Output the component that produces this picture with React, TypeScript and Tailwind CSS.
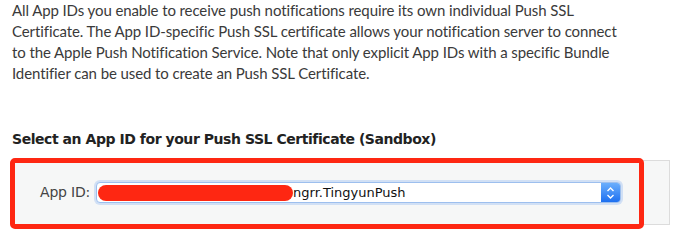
import React from "react";

const lines = [
  "All App IDs you enable to receive push notifications require its own individual Push SSL",
  "Certificate. The App ID-specific Push SSL certificate allows your notification server to connect",
  "to the Apple Push Notification Service. Note that only explicit App IDs with a specific Bundle",
  "Identifier can be used to create an Push SSL Certificate.",
];

export default function App() {
  return (
    <div
      className="relative h-[252px] w-[679px] overflow-hidden bg-white text-[#3a3a3a]"
      style={{ fontFamily: "Lato, 'Open Sans', sans-serif" }}
    >
      {/* Intro copy */}
      <p className="pl-3 pt-0 text-[15px] leading-[21px] tracking-[-0.1px]">
        {lines.map((l) => (
          <span key={l} className="block whitespace-nowrap">
            {l}
          </span>
        ))}
      </p>

      <h3 className="mt-[45px] pl-3 font-['DejaVu_Sans',sans-serif] text-[14px] font-bold leading-[20px] tracking-[-0.45px] text-[#222]">
        Select an App ID for your Push SSL Certificate (Sandbox)
      </h3>

      {/* Form panel */}
      <div className="ml-[14px] mr-[9px] mt-[11px] flex h-[65px] items-center border border-[#dcdcdc] bg-[#f6f7f7] pl-[25px] font-['DejaVu_Sans',sans-serif]">
        <span className="mr-[6px] text-[14px] tracking-[-0.2px] text-[#444]">App ID:</span>
        <Select />
      </div>

      {/* Annotation box */}
      <div className="absolute left-[10px] top-[158px] h-[71px] w-[634px] rounded-[5px] border-[5px] border-[#fe2712]" />
    </div>
  );
}

function Select() {
  return (
    <div className="relative flex h-[21px] w-[525px] items-center rounded-[4px] border border-[#9dbfee] bg-white shadow-[0_0_0_2px_rgba(140,180,240,0.35)]">
      <span className="ml-[196px] text-[13px] text-[#111]">ngrr.TingyunPush</span>
      {/* redaction scribble */}
      <div className="absolute left-[1px] top-[2px] h-[16px] w-[195px] rounded-full bg-[#fe2712]" />
      <div className="ml-auto flex h-full w-[19px] items-center justify-center rounded-r-[3px] bg-gradient-to-b from-[#6aaefc] to-[#1c6ff0]">
        <svg width="9" height="14" viewBox="0 0 9 14" aria-hidden>
          <path d="M1.5 5 L4.5 2 L7.5 5" fill="none" stroke="white" strokeWidth="1.4" />
          <path d="M1.5 9 L4.5 12 L7.5 9" fill="none" stroke="white" strokeWidth="1.4" />
        </svg>
      </div>
    </div>
  );
}
